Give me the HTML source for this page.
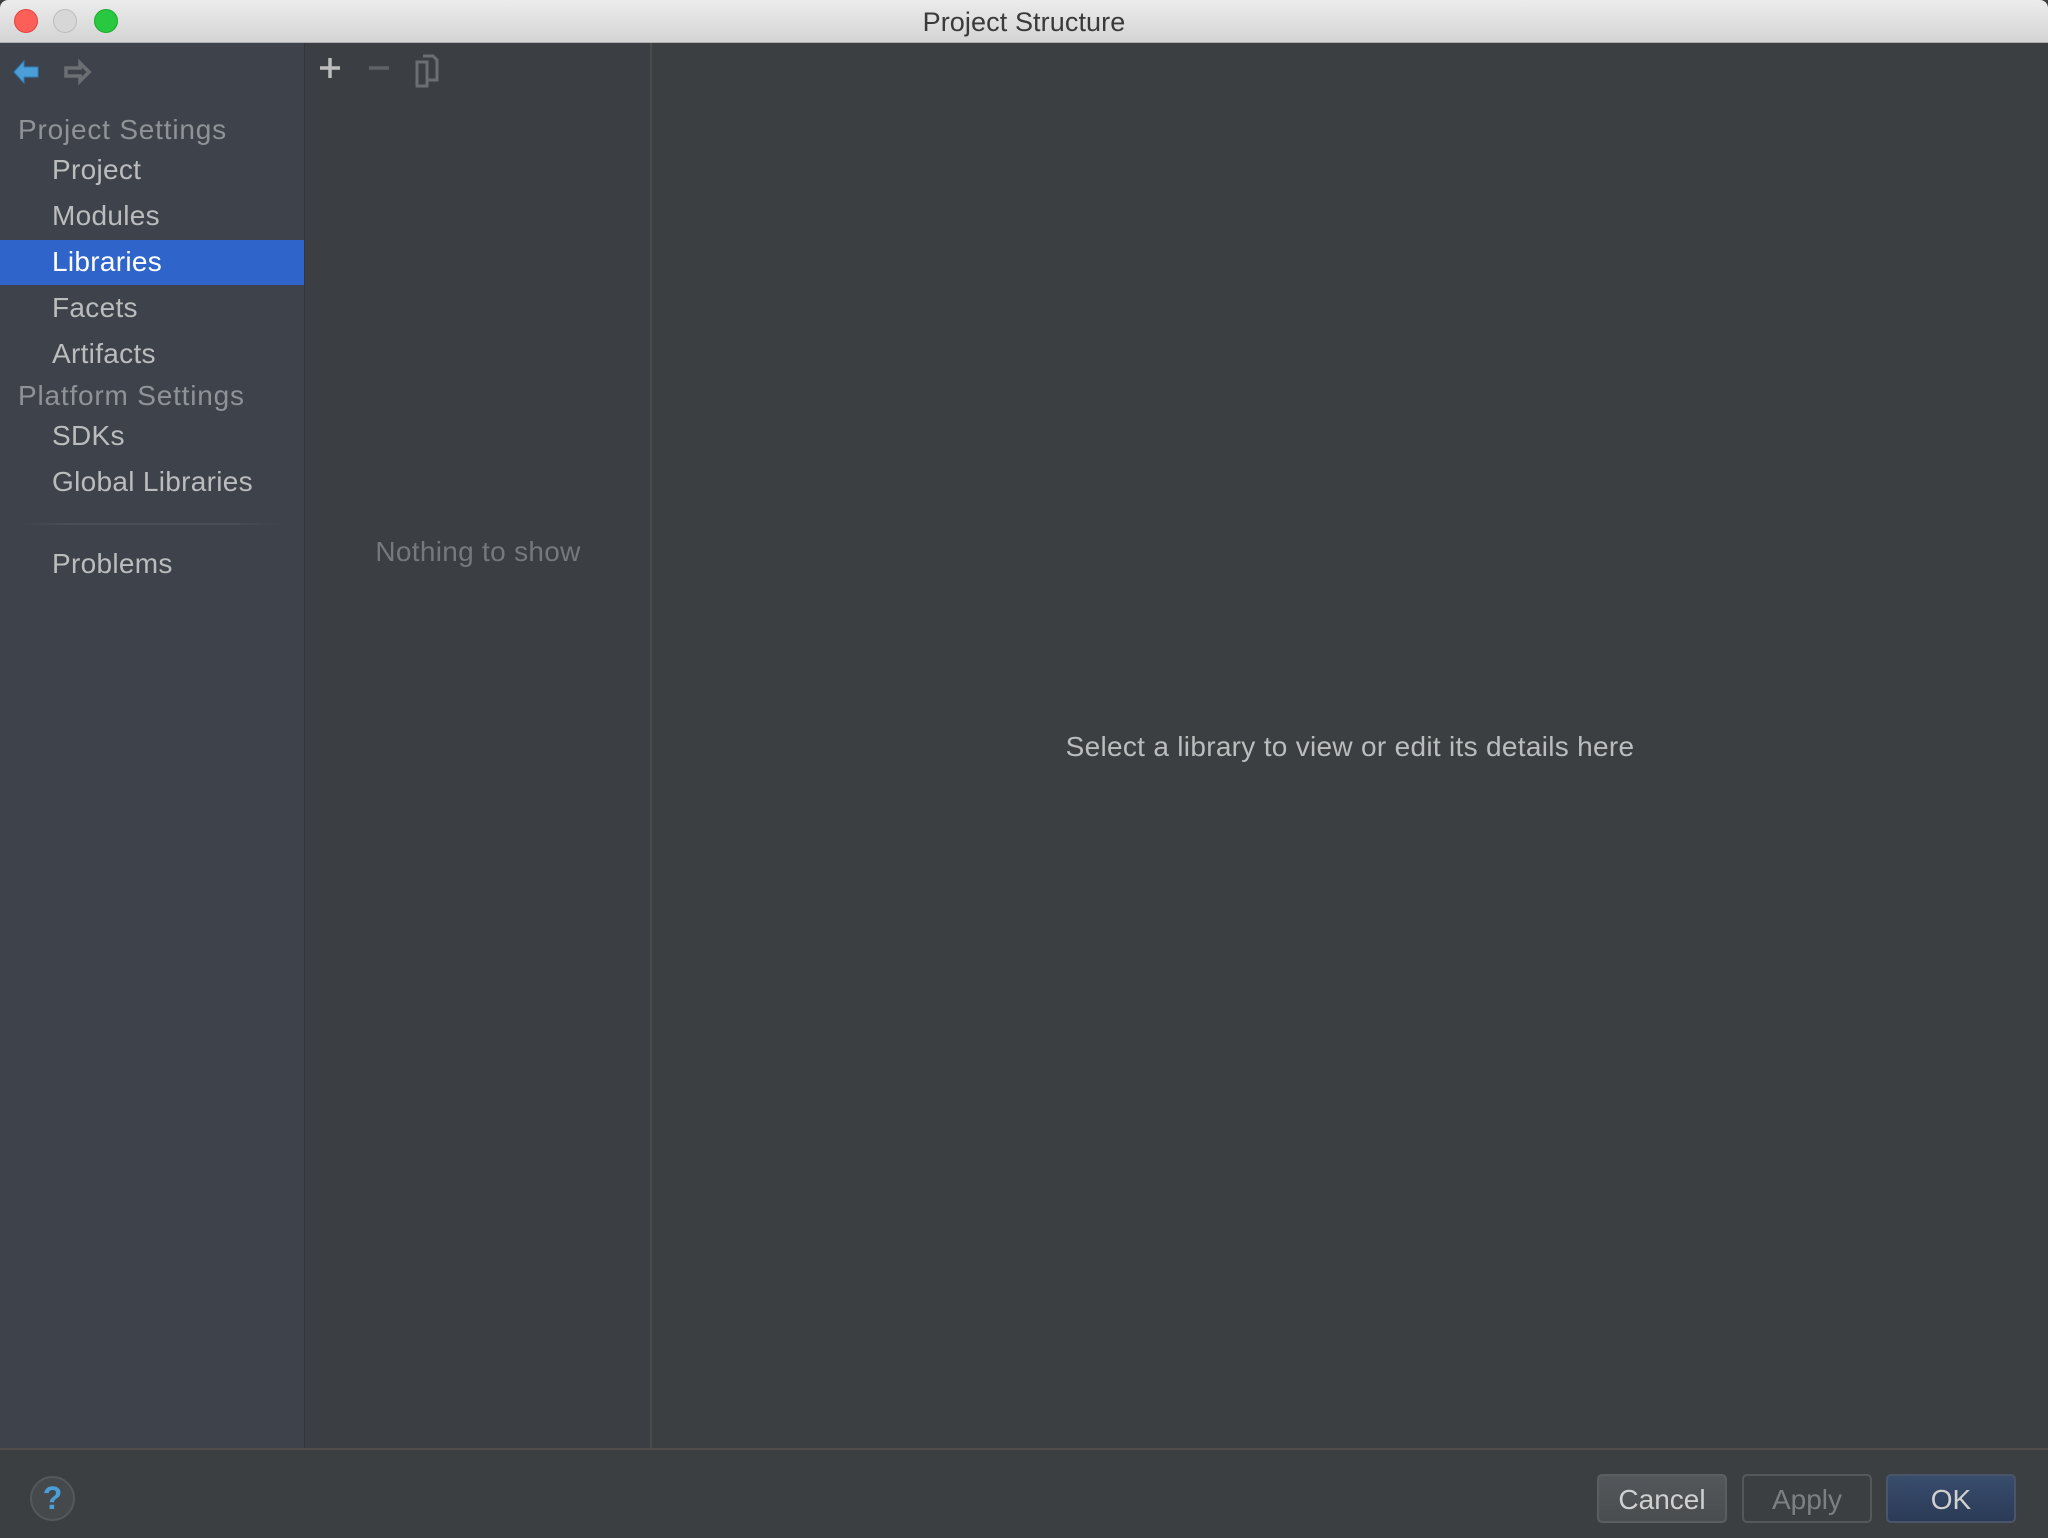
<!DOCTYPE html>
<html><head><style>
*{margin:0;padding:0;box-sizing:border-box}
body{width:2048px;height:1538px;background:#3c3f41;font-family:"Liberation Sans",sans-serif;position:relative;overflow:hidden}
.abs{position:absolute}
#title{left:0;top:0;width:2048px;height:43px;background:linear-gradient(#ececec,#d4d4d4);border-bottom:1px solid #b0b0b0;border-radius:8px 8px 0 0}
#title .t{position:absolute;left:0;right:0;top:7px;text-align:center;font-size:27px;color:#3a3a3a;letter-spacing:0.1px}
.tl{position:absolute;top:9px;width:24px;height:24px;border-radius:50%}
#side{left:0;top:43px;width:304px;height:1405px;background:#3e434b}
#mid{left:304px;top:43px;width:348px;height:1405px;background:#3b3e42;border-left:1px solid #333538;border-right:2px solid #4a4b4d}
.s{position:absolute;font-size:28px;color:#bbbcbd;line-height:46px;letter-spacing:0.3px}
.h{color:#8f9398;left:18px;letter-spacing:0.8px}
.i{left:52px}
#sel{left:0;top:240px;width:304px;height:45px;background:#2f65ca}
#bot{left:0;top:1448px;width:2048px;height:90px;background:#3c3f41;border-top:2px solid #4e4c4c}
.btn{position:absolute;top:1474px;height:49px;width:130px;border-radius:5px;font-size:28px;text-align:center;line-height:47px}
</style></head><body>
<div id="title" class="abs"><div class="tl" style="left:14px;background:#fc5f57;border:1px solid #e0443e"></div><div class="tl" style="left:53px;background:#d7d7d7;border:1px solid #bdbdbd"></div><div class="tl" style="left:94px;background:#28c840;border:1px solid #1aab29"></div><div class="t">Project Structure</div></div>
<div id="side" class="abs"></div>
<div id="sel" class="abs"></div>
<div id="mid" class="abs"></div>
<svg class="abs" style="left:10px;top:56px" width="100" height="34" viewBox="0 0 100 34">
<path d="M4 16 L14 5 L14 11 L28 11 L28 21 L14 21 L14 27 Z" fill="#4a9fd8" stroke="#2f7fb8" stroke-width="1"/>
<path d="M79 16 L70 7 L70 12 L56 12 L56 20 L70 20 L70 25 Z" fill="none" stroke="#6b6e72" stroke-width="3.5"/>
</svg>
<svg class="abs" style="left:315px;top:52px" width="140" height="40" viewBox="0 0 140 40">
<path d="M15 6 V26 M5 16 H25" stroke="#bdbdbd" stroke-width="3.5"/>
<path d="M54 16 H74" stroke="#5f6266" stroke-width="3.5"/>
<path d="M102 10 H112 V34 H102 Z M108 4 H118 L122 8 V28 H112" fill="none" stroke="#6b6e72" stroke-width="3"/>
</svg>
<div class="s h" style="top:107px">Project Settings</div>
<div class="s i" style="top:147px">Project</div>
<div class="s i" style="top:193px">Modules</div>
<div class="s i" style="top:239px;color:#fff">Libraries</div>
<div class="s i" style="top:285px">Facets</div>
<div class="s i" style="top:331px">Artifacts</div>
<div class="s h" style="top:373px">Platform Settings</div>
<div class="s i" style="top:413px">SDKs</div>
<div class="s i" style="top:459px">Global Libraries</div>
<div class="abs" style="left:18px;top:523px;width:263px;height:2px;background:linear-gradient(90deg,#3e434b,#4a4e55 20%,#4a4e55 80%,#3e434b)"></div>
<div class="s i" style="top:541px">Problems</div>
<div class="s" style="left:304px;width:348px;text-align:center;top:529px;color:#76797c">Nothing to show</div>
<div class="s" style="left:652px;width:1396px;text-align:center;top:724px;color:#bbbcbd">Select a library to view or edit its details here</div>
<div id="bot" class="abs"></div>
<div class="abs" style="left:30px;top:1476px;width:45px;height:45px;border-radius:50%;background:#45494c;border:2px solid #55585b;color:#4a9fd8;font-weight:bold;font-size:32px;text-align:center;line-height:41px">?</div>
<div class="btn" style="left:1597px;background:linear-gradient(#53575a,#4a4d50);border:2px solid #5b5e61;color:#d0d0d0">Cancel</div>
<div class="btn" style="left:1742px;background:#3c3f41;border:2px solid #55585b;color:#7d8083">Apply</div>
<div class="btn" style="left:1886px;background:linear-gradient(#384c6c,#2b3b57);border:2px solid #4a5569;color:#d0d0d0">OK</div>
</body></html>
